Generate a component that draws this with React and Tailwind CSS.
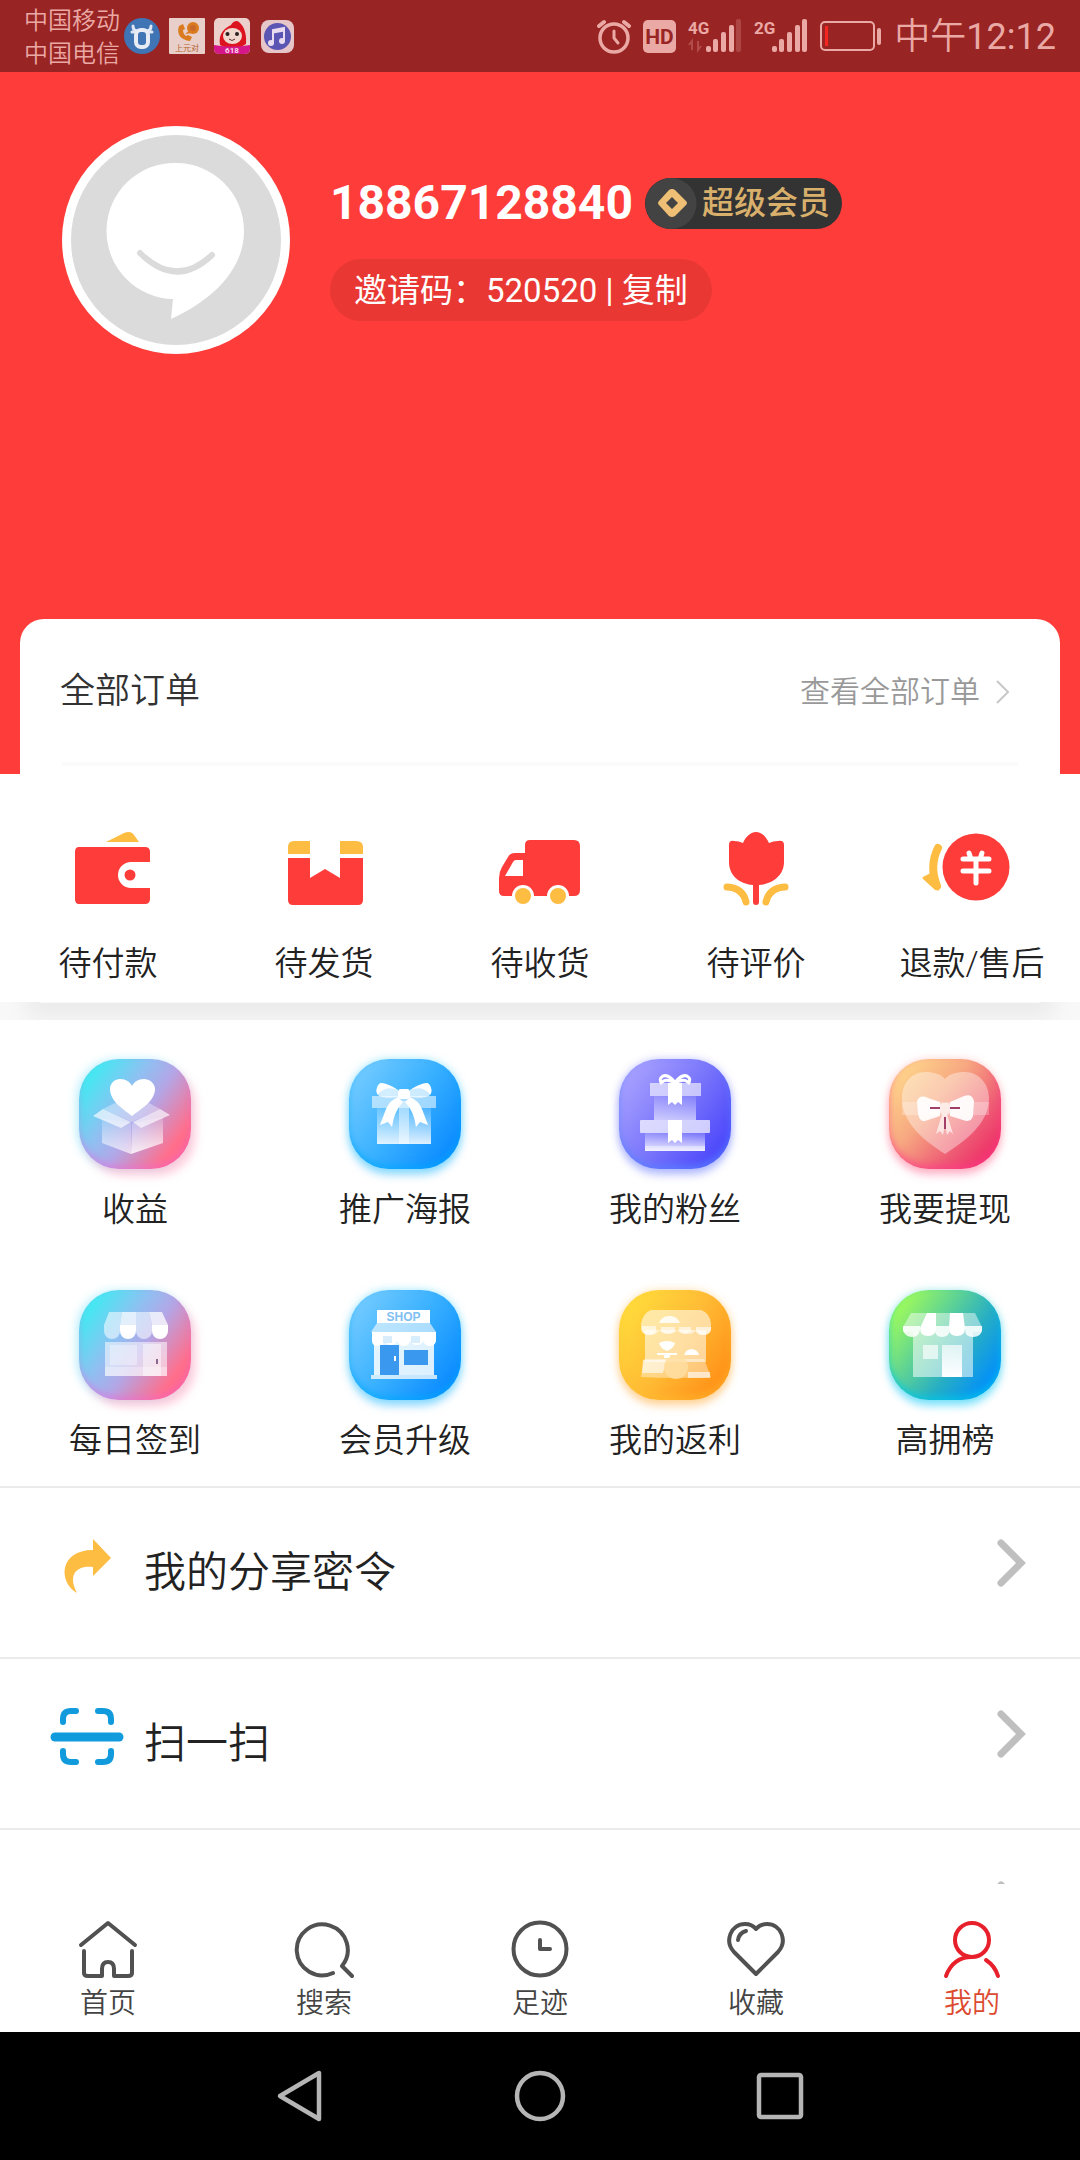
import React from "react";

const orders = [
  { label: "待付款", Icon: WalletIcon },
  { label: "待发货", Icon: ParcelIcon },
  { label: "待收货", Icon: TruckIcon },
  { label: "待评价", Icon: TulipIcon },
  { label: "退款/售后", Icon: RefundIcon },
];

const pinkTile =
  "bg-[linear-gradient(125deg,#38eff2_8%,#8fc0f2_38%,#b3a6e6_55%,#ff6f8c_82%,#ff5f86_100%)] shadow-[5px_7px_9px_rgba(255,120,160,0.35),-3px_0_9px_rgba(90,220,255,0.4),inset_0_-4px_6px_rgba(240,100,220,0.4)]";
const blueTile =
  "bg-[linear-gradient(125deg,#74cbff_8%,#38b0ff_50%,#0a8aff_90%)] shadow-[0_6px_9px_rgba(60,190,255,0.5),0_0_8px_rgba(90,220,255,0.5),inset_0_-4px_6px_rgba(0,170,255,0.6)]";

const services = [
  { label: "收益", Icon: EarningsIcon, tile: pinkTile },
  { label: "推广海报", Icon: GiftIcon, tile: blueTile },
  {
    label: "我的粉丝",
    Icon: GiftStackIcon,
    tile: "bg-[linear-gradient(125deg,#a9a2ff_8%,#7a76fb_50%,#4742fb_92%)] shadow-[0_6px_9px_rgba(110,130,255,0.45),0_0_8px_rgba(130,130,255,0.4),inset_0_-4px_7px_rgba(90,130,255,0.7)]",
  },
  {
    label: "我要提现",
    Icon: HeartBowIcon,
    tile: "bg-[linear-gradient(130deg,#ffdc8c_5%,#f7a981_40%,#ee5a74_70%,#ee2463_95%)] shadow-[0_6px_9px_rgba(255,70,130,0.35),0_0_8px_rgba(255,150,140,0.35),inset_0_-4px_7px_rgba(255,60,140,0.6)]",
  },
  { label: "每日签到", Icon: StallIcon, tile: pinkTile },
  { label: "会员升级", Icon: ShopIcon, tile: blueTile },
  {
    label: "我的返利",
    Icon: BakeryIcon,
    tile: "bg-[linear-gradient(125deg,#ffdf3c_5%,#ffbb35_50%,#ff8a12_95%)] shadow-[0_6px_9px_rgba(255,175,70,0.45),0_0_8px_rgba(255,190,80,0.4),inset_0_-4px_7px_rgba(255,190,50,0.5)]",
  },
  {
    label: "高拥榜",
    Icon: MarketIcon,
    tile: "bg-[linear-gradient(125deg,#a6ff55_8%,#5fd394_38%,#27aec4_62%,#008cff_90%)] shadow-[0_6px_9px_rgba(0,200,255,0.45),0_0_8px_rgba(110,220,220,0.5),inset_0_-4px_7px_rgba(0,200,230,0.7)]",
  },
];

const tabs = [
  { label: "首页", Icon: HomeIcon },
  { label: "搜索", Icon: SearchIcon },
  { label: "足迹", Icon: ClockIcon },
  { label: "收藏", Icon: HeartIcon },
  { label: "我的", Icon: UserIcon, active: true },
];

export default function App() {
  return (
    <div className="flex h-screen flex-col bg-white font-[Roboto,'Noto_Sans_CJK_SC',sans-serif] text-[#222]">
      <StatusBar />
      <main className="min-h-0 flex-1 overflow-y-auto [scrollbar-width:none]">
        <Profile />
        <Orders />
        <Services />
        <Menu />
      </main>
      <TabBar />
      <SystemNav />
    </div>
  );
}

function StatusBar() {
  return (
    <header className="flex h-[72px] shrink-0 items-center justify-between bg-[#992424] px-6 text-[#eaa9a4]">
      <div className="flex items-center gap-[9px]">
        <div className="mr-[-5px] pt-1 text-2xl leading-[33px] font-[350]">
          <p>中国移动</p>
          <p>中国电信</p>
        </div>
        <svg width="36" height="36" viewBox="0 0 36 36">
          <circle cx="18" cy="18" r="18" fill="#3f74b5" />
          <path d="M9 8c0 4 2 5 5 5M27 8c0 4-2 5-5 5" fill="none" stroke="#dfe6f2" strokeWidth="3" strokeLinecap="round" />
          <path d="M8 14h3M28 14h-3" stroke="#dfe6f2" strokeWidth="3" strokeLinecap="round" />
          <rect x="12" y="12" width="12" height="17" rx="5" fill="#3f74b5" stroke="#e6ebf4" strokeWidth="4" />
        </svg>
        <svg width="36" height="36" viewBox="0 0 36 36">
          <rect width="36" height="36" rx="1" fill="#e8cfc9" />
          <path d="M10 8c-3 8 2 14 11 15l2-4-4-2-2 1c-2-1-3-4-3-6l2-1-2-5z" fill="#db7b1f" />
          <circle cx="24" cy="10" r="6" fill="#db7b1f" />
          <path d="M16 16l5-4 2 3z" fill="#db7b1f" />
          <circle cx="24" cy="10" r="3" fill="#c9682a" />
          <text x="18" y="33" textAnchor="middle" fontSize="8" fill="#b5602c">上元对</text>
        </svg>
        <svg width="36" height="36" viewBox="0 0 36 36">
          <rect width="36" height="36" rx="5" fill="#ecd0cc" />
          <path d="M6 27c-2-12 5-17 11-20 2-4 6-5 8-3 5 4 8 12 7 22l-5 3H10z" fill="#dc1420" />
          <ellipse cx="18.500" cy="18" rx="9.500" ry="8" fill="#f1d8cf" />
          <circle cx="13.500" cy="16" r="2" fill="#2b2022" />
          <circle cx="23" cy="16" r="2" fill="#2b2022" />
          <path d="M15 21q3 3 6 0" stroke="#5a3030" fill="none" />
          <path d="M0 27q18 3 36 0v4a5 5 0 0 1-5 5H5a5 5 0 0 1-5-5z" fill="#d6178a" />
          <text x="18" y="35" textAnchor="middle" fontSize="8" fontWeight="700" fill="#f7d9ea">618</text>
        </svg>
        <svg width="36" height="36" viewBox="0 0 36 36">
          <rect x="2" y="2" width="33" height="33" rx="8" fill="#e6c6c9" />
          <circle cx="18.500" cy="18.500" r="13.500" fill="#5b55b4" />
          <path d="M14 25V12l11-2v13" fill="none" stroke="#e9dcf0" strokeWidth="2" />
          <path d="M14 14l11-2" stroke="#e9dcf0" strokeWidth="3" />
          <circle cx="12" cy="25" r="3" fill="#e9dcf0" />
          <circle cx="23" cy="23" r="3" fill="#e9dcf0" />
        </svg>
      </div>
      <div className="flex items-center gap-3">
        <svg width="34" height="36" viewBox="0 0 34 36" fill="none" stroke="currentColor" strokeWidth="4" strokeLinecap="round">
          <circle cx="17" cy="20" r="14" strokeWidth="3.500" />
          <path d="M2 8l5-4M32 8l-5-4" />
          <path d="M17 13v7l4 5" strokeWidth="3" />
        </svg>
        <svg width="33" height="33" viewBox="0 0 33 33">
          <rect width="33" height="33" rx="5" fill="currentColor" />
          <text x="16.500" y="24" textAnchor="middle" fontSize="21" fontWeight="700" fill="#992424">HD</text>
        </svg>
        <Signal label="4G" weak />
        <Signal label="2G" />
        <svg width="62" height="30" viewBox="0 0 62 30">
          <rect x="1" y="1" width="53" height="28" rx="4" fill="none" stroke="currentColor" strokeWidth="2" />
          <rect x="5" y="5" width="3" height="20" fill="#f5251f" />
          <rect x="57" y="7" width="4" height="17" rx="2" fill="currentColor" />
        </svg>
        <span className="pt-0.5 text-4xl leading-none whitespace-nowrap">
          <span className="font-[350]">中午</span>12:12
        </span>
      </div>
    </header>
  );
}

function Signal({ label, weak }) {
  return (
    <svg width="54" height="36" viewBox="0 0 54 36" fill="currentColor">
      <text x="0" y="16" fontSize="17" fontWeight="700">{label}</text>
      {weak && <path d="M4 32v-9l-3 4M10 23v9l3-4" fill="none" stroke="currentColor" strokeWidth="2" opacity="0.3" />}
      <rect x="18" y="28" width="5" height="6" rx="2" />
      <rect x="25" y="21" width="5" height="13" rx="2" />
      <rect x="33" y="14" width="5" height="20" rx="2" />
      <rect x="41" y="7" width="5" height="27" rx="2" />
      <rect x="48" y="1" width="5" height="33" rx="2" opacity={weak ? 0.25 : 1} />
    </svg>
  );
}

function Profile() {
  return (
    <section className="bg-[#fe3d3b]">
      <div className="flex h-[547px] items-start gap-10 pt-[54px] pl-[62px]">
        <svg width="228" height="228" viewBox="0 0 228 228" className="shrink-0">
          <circle cx="114" cy="114" r="114" fill="#fff" />
          <circle cx="114" cy="114" r="105" fill="#dbdbdb" />
          <path d="M114 37a68 68 0 0 1 68 68c0 37-29 68-73 88l2-20a68 68 0 0 1 3-136z" fill="#fff" />
          <path d="M78 127q36 36 72 2" fill="none" stroke="#dbdbdb" strokeWidth="6" strokeLinecap="round" />
        </svg>
        <div className="mt-[51px] flex flex-col items-start gap-[30px]">
          <div className="flex items-center gap-3">
            <h1 className="text-5xl leading-[52px] font-bold text-white">18867128840</h1>
            <span className="flex h-[51px] items-center rounded-full bg-[#333] pr-3 text-[32px] leading-none font-medium text-[#d9b06b]">
              <svg width="57" height="51" viewBox="0 0 57 51">
                <circle cx="26" cy="25.500" r="25.500" fill="#434343" />
                <path fillRule="evenodd" d="M27 11q2 0 3 1l11 11q2 2 0 4L30 38q-3 2-6 0L14 27q-2-2 0-4l10-11q1-1 3-1zM27 19l-6 6 6 6 6-6z" fill="#eebf74" />
              </svg>
              超级会员
            </span>
          </div>
          <button className="h-[62px] rounded-full bg-[#e93834] px-6 text-[33px] leading-none text-white">邀请码：520520 | 复制</button>
        </div>
      </div>
      <div className="mx-5 h-[155px] rounded-t-3xl bg-white px-[42px]">
        <div className="flex h-[147px] items-center justify-between border-b-4 border-[#fbfbfb] pt-0.5">
          <h2 className="-ml-0.5 text-[35px] leading-none text-[#333] font-[350]">全部订单</h2>
          <a href="#orders" className="mr-2 flex items-center gap-4 text-[30px] leading-none text-[#999] font-[350]">
            查看全部订单
            <svg width="14" height="24" viewBox="0 0 14 24" fill="none" stroke="#c8c8c8" strokeWidth="2">
              <path d="M1 1l11 11L1 23" />
            </svg>
          </a>
        </div>
      </div>
    </section>
  );
}

function Orders() {
  return (
    <section>
      <div className="grid h-[228px] grid-cols-5 pt-[54px]">
        {orders.map(({ label, Icon }) => (
          <a key={label} href="#order" className="flex flex-col items-center gap-[35px] text-[33px] leading-[42px] font-[350] whitespace-nowrap">
            <Icon />
            {label}
          </a>
        ))}
      </div>
      <div className="h-[18px] overflow-hidden bg-[#f8f8f8]">
        <div className="mx-10 h-px shadow-[0_0_22px_14px_rgba(0,0,0,0.06)]" />
      </div>
    </section>
  );
}

function Services() {
  return (
    <section className="grid h-[466px] grid-cols-4 content-start gap-y-[58px] pt-[39px]">
      {services.map(({ label, Icon, tile }) => (
        <a key={label} href="#service" className="flex flex-col items-center gap-[18px] text-[33px] leading-[45px] font-[350]">
          <span className={`block h-[110px] w-28 rounded-[40px] ${tile}`}>
            <svg width="112" height="110" viewBox="0 0 112 110" fill="#fff">
              <defs>
                <linearGradient id="fadeDown" x1="0" y1="0" x2="0" y2="1">
                  <stop offset="0" stopColor="#fff" stopOpacity="0.15" />
                  <stop offset="1" stopColor="#fff" stopOpacity="0.85" />
                </linearGradient>
                <linearGradient id="fadeUp" x1="0" y1="0" x2="0" y2="1">
                  <stop offset="0" stopColor="#fff" stopOpacity="0.65" />
                  <stop offset="1" stopColor="#fff" />
                </linearGradient>
              </defs>
              <Icon />
            </svg>
          </span>
          {label}
        </a>
      ))}
    </section>
  );
}

function Menu() {
  return (
    <nav>
      <MenuRow label="我的分享密令">
        <svg width="74" height="60" viewBox="0 0 74 60" className="mb-3.5">
          <path d="M43 3l18 19-18 18v-9c-18-2-25 9-16 26C8 46 9 14 43 14z" fill="#fdbc42" />
        </svg>
      </MenuRow>
      <MenuRow label="扫一扫">
        <svg width="74" height="60" viewBox="0 0 74 60" fill="none" stroke="#119bdc" strokeWidth="6" strokeLinecap="round" className="mb-3.5">
          <path d="M13 15v-3q0-8 8-8h5M48 4h5q8 0 8 8v3M13 44v3q0 8 8 8h5M48 55h5q8 0 8-8v-3" />
          <path d="M5 30h64" strokeWidth="9" />
        </svg>
      </MenuRow>
      <MenuRow />
    </nav>
  );
}

function MenuRow({ label, children }) {
  return (
    <a href="#menu" className="flex h-[171px] items-center border-t-2 border-[#ebebeb] pr-[54px] pl-[50px] text-[42px] leading-none font-[350]">
      {children}
      {label && <span className="ml-5">{label}</span>}
      <svg width="30" height="52" viewBox="0 0 30 52" fill="none" stroke="#bfbfbf" strokeWidth="7" strokeLinecap="round" className="mb-4 ml-auto">
        <path d="M5 4l20 20L5 44" />
      </svg>
    </a>
  );
}

function TabBar() {
  return (
    <nav className="grid h-[148px] shrink-0 grid-cols-5 bg-white pt-[35px]">
      {tabs.map(({ label, Icon, active }) => (
        <a
          key={label}
          href="#tab"
          className={active ? "flex flex-col items-center gap-1 text-[28px] leading-[42px] text-[#dc4a30] font-[350]" : "flex flex-col items-center gap-1 text-[28px] leading-[42px] text-[#444] font-[350]"}
        >
          <svg width="60" height="60" viewBox="0 0 60 60" fill="none" stroke={active ? "#e8202c" : "#515151"} strokeWidth="4" strokeLinecap="round" strokeLinejoin="round">
            <Icon />
          </svg>
          {label}
        </a>
      ))}
    </nav>
  );
}

function SystemNav() {
  return (
    <div className="flex h-32 shrink-0 items-center justify-center gap-[180px] bg-black text-[#b5b5b5]">
      <button aria-label="返回">
        <svg width="60" height="60" viewBox="0 0 60 60" fill="none" stroke="currentColor" strokeWidth="4.500" strokeLinejoin="round">
          <path d="M49 7v46L10 30z" />
        </svg>
      </button>
      <button aria-label="主屏幕">
        <svg width="60" height="60" viewBox="0 0 60 60" fill="none" stroke="currentColor" strokeWidth="4.500">
          <circle cx="30" cy="30" r="23" />
        </svg>
      </button>
      <button aria-label="最近任务">
        <svg width="60" height="60" viewBox="0 0 60 60" fill="none" stroke="currentColor" strokeWidth="4.500">
          <rect x="9" y="9" width="42" height="42" rx="2" />
        </svg>
      </button>
    </div>
  );
}

/* Order state icons */

function OrderSvg({ children }) {
  return (
    <svg width="96" height="80" viewBox="0 0 96 80" overflow="visible" fill="#fe3d3b">
      {children}
    </svg>
  );
}

function WalletIcon() {
  return (
    <OrderSvg>
      <path d="M46 14L64 5q7-3 10 2l5 7z" fill="#fdbc42" />
      <path d="M19 19h66q5 0 5 5v10H71a13 13 0 0 0 0 26h19v11q0 5-5 5H19q-4 0-4-5V24q0-5 4-5z" />
      <circle cx="70" cy="47" r="5.500" />
    </OrderSvg>
  );
}

function ParcelIcon() {
  return (
    <OrderSvg>
      <path d="M12 26v-7q0-6 6-6h16v13zM64 13h16q7 0 7 6v7H64z" fill="#fdbc42" />
      <path d="M12 30h22v20l15-9 15 9V30h23v42q0 5-5 5H17q-5 0-5-5z" />
    </OrderSvg>
  );
}

function TruckIcon() {
  return (
    <OrderSvg>
      <path
        fillRule="evenodd"
        d="M38 12h44q6 0 6 6v44q0 6-6 6H12q-5 0-5-5V50q0-6 3-11l6-10q2-4 7-4h10v-8q0-5 5-5zM31 32h-7q-2 0-3 2l-8 14h18z"
      />
      <circle cx="31" cy="68" r="11" fill="#fff" />
      <circle cx="66" cy="68" r="11" fill="#fff" />
      <circle cx="31" cy="68" r="8" fill="#fdbc42" />
      <circle cx="66" cy="68" r="8" fill="#fdbc42" />
    </OrderSvg>
  );
}

function TulipIcon() {
  return (
    <OrderSvg>
      <path d="M21 17q0-5 5-4 5 0 9 2C38 8 43 4 48 4s10 4 13 11q4-2 9-2 6-1 6 4v17c0 13-11 22-25 23v17q0 3-3 3t-3-3V57C31 56 21 47 21 34z" />
      <path d="M19 59q16 1 19 15M77 59q-16 1-19 15" fill="none" stroke="#fdbc42" strokeWidth="7" strokeLinecap="round" />
    </OrderSvg>
  );
}

function RefundIcon() {
  return (
    <OrderSvg>
      <circle cx="52" cy="39" r="33.500" />
      <path d="M39 31h26M39 43h26M52 31v24M45 25l2 6M58 25l-2 6" fill="none" stroke="#fff" strokeWidth="5" strokeLinecap="round" />
      <path d="M14 20q-9 18-1 38" fill="none" stroke="#fdbc42" strokeWidth="8" strokeLinecap="round" />
      <path d="M0 50l8-4 6 15-3-1z" fill="#fdbc42" stroke="#fdbc42" strokeWidth="3" strokeLinejoin="round" />
    </OrderSvg>
  );
}

/* Service tile drawings, on a 112 x 110 canvas */

function EarningsIcon() {
  return (
    <>
      <path d="M24 50l12-6h34l11 6-28 13z" opacity="0.35" />
      <path d="M23 59l29 5v31l-29-11z" fill="url(#fadeDown)" opacity="0.8" />
      <path d="M53 64l31-6v26L52 95z" fill="url(#fadeDown)" />
      <path d="M14 57l10-7 28 13-10 6zM91 56l-10-6-27 13 8 6z" opacity="0.65" />
      <path d="M53 57C44 50 31 42 31 30c0-6 5-10 10-10 6 0 10 3 12 7 2-4 6-7 12-7 5 0 11 4 11 10 0 12-14 20-23 27z" />
    </>
  );
}

function GiftIcon() {
  return (
    <>
      <rect x="23" y="37" width="64" height="12" opacity="0.55" />
      <rect x="28" y="49" width="54" height="36" fill="url(#fadeDown)" />
      <rect x="50" y="42" width="10" height="43" opacity="0.45" />
      <path d="M49 31q-9-6-17-7c-4 1-6 10-3 12q5 4 20 2zM61 31q9-6 17-7c4 1 6 10 3 12q-5 4-20 2z" opacity="0.75" />
      <path d="M29 35q8-9 20-4-9-6-17-7c-4 1-6 9-3 11zM81 35q-8-9-20-4 9-6 17-7c4 1 6 9 3 11z" />
      <rect x="49" y="30" width="12" height="10" rx="3" />
      <path d="M49 38q-8 3-12 12l-6 16 8-3 4 5q2-16 11-25zM61 38q8 3 12 12l6 16-8-3-4 5q-2-16-11-25z" />
    </>
  );
}

function GiftStackIcon() {
  return (
    <>
      <rect x="31" y="24" width="51" height="13" opacity="0.6" />
      <rect x="35" y="37" width="42" height="24" fill="url(#fadeDown)" opacity="0.7" />
      <rect x="21" y="61" width="70" height="13" rx="1" opacity="0.7" />
      <rect x="26" y="74" width="60" height="18" fill="url(#fadeDown)" />
      <rect x="26" y="87" width="60" height="5" opacity="0.35" />
      <path d="M49 24h14v22l-4-3-3 3-3-3-4 3zM49 61h14v23l-4-3-3 3-3-3-4 3z" />
      <path d="M56 24q-6-9-12-7-5 3-1 8M56 24q6-9 12-7 5 3 1 8M43 23q5-4 13 1 8-5 13-1" fill="none" stroke="#fff" strokeWidth="3" />
    </>
  );
}

function HeartBowIcon() {
  return (
    <>
      <path d="M56 95C38 83 13 66 13 39c0-15 10-26 23-26 9 0 16 2 20 7 4-5 11-7 20-7 13 0 24 11 24 26 0 27-26 44-44 56z" opacity="0.38" />
      <rect x="13" y="43" width="87" height="13" opacity="0.25" />
      <path d="M28 42q3-7 11-3l12 4v14l-12 4q-8 4-10-6zM85 42q-2-8-10-5l-14 6v14l13 4q8 3 10-4z" opacity="0.92" />
      <rect x="51" y="44" width="10" height="11" rx="3" opacity="0.6" />
      <path d="M53 55l-6 20 4-3 3 4 2-10 2 10 3-4 3 3-6-20z" opacity="0.65" />
      <path d="M41 49h10M61 49h10M56 58v12" stroke="#a04068" strokeWidth="2" />
    </>
  );
}

function StallIcon() {
  return (
    <>
      <rect x="26" y="52" width="62" height="34" opacity="0.55" />
      <rect x="31" y="55" width="27" height="20" opacity="0.35" />
      <rect x="64" y="54" width="18" height="32" opacity="0.45" />
      <rect x="26" y="77" width="62" height="9" opacity="0.3" />
      <path d="M30 22h13l-2 13v6a8 8 0 0 1-16 0v-6zM57 22h13l3 13v6a8 8 0 0 1-16 0z" opacity="0.55" />
      <path d="M43 22h14v13H41zM70 22h13l6 13H73z" opacity="0.75" />
      <path d="M41 35h16v6a8 8 0 0 1-16 0zM73 35h16v6a8 8 0 0 1-16 0z" />
      <path d="M78 69v5" stroke="#8c6a90" strokeWidth="2" />
    </>
  );
}

function ShopIcon() {
  return (
    <>
      <rect x="28" y="20" width="53" height="13" />
      <text x="54.500" y="31" textAnchor="middle" fontSize="12" fontWeight="700" fontFamily="'Liberation Sans', sans-serif" fill="#7fc0f2">SHOP</text>
      <path d="M28 33h53l6 9H22z" opacity="0.6" />
      <rect x="25" y="50" width="60" height="35" opacity="0.85" />
      <rect x="22" y="85" width="66" height="4" opacity="0.75" />
      <path d="M23 42h64v9q-1 5-6 5t-7-5q-1 4-6 4t-7-4q-1 5-6 5t-7-5q-1 4-6 4t-6-4q-1 5-7 5t-6-5z" />
      <path d="M31 55h19v30H31z" fill="#3a98ee" />
      <rect x="55" y="60" width="24" height="15" fill="#3a98ee" />
      <path d="M46 66v5" stroke="#fff" strokeWidth="2" />
      <path d="M34 46h9v7h-9zM62 46h9v7h-9z" fill="#bfe2fb" opacity="0.6" />
    </>
  );
}

function BakeryIcon() {
  return (
    <>
      <rect x="26" y="40" width="61" height="32" opacity="0.55" />
      <path d="M32 20h50q9 3 10 14v6q-1 5-8 5-6 0-7-5-2 4-9 4t-10-4q-3 4-9 4t-9-4q-2 5-9 5-8 0-9-6v-5q2-11 10-14z" opacity="0.55" />
      <path d="M23 36h14v5q-3 4-7 4-6 0-7-5zM42 37h14v4q-7 5-14 0zM60 37h12v4q-6 5-12 0zM77 37h15v3q-2 5-8 5-5 0-7-4z" opacity="0.6" />
      <path d="M40 33q2-6 9-7 9-1 12 7z" opacity="0.85" />
      <path d="M48 61q-7-3-8-8 8-4 16 0-1 5-8 8zM38 63h20v2h-7v3h-6v-3h-7zM65 65q2-6 8-6 6 1 7 6z" />
      <path d="M25 69h60l7 18q-35 2-70 0z" opacity="0.4" />
      <path d="M24 70h23l-3 13H23zM69 82h22v6H69z" opacity="0.6" />
      <circle cx="57" cy="77" r="12" fill="#ffdfa3" opacity="0.8" />
    </>
  );
}

function MarketIcon() {
  return (
    <>
      <rect x="24" y="42" width="60" height="45" opacity="0.55" />
      <rect x="34" y="55" width="15" height="14" opacity="0.65" />
      <rect x="53" y="55" width="20" height="32" fill="url(#fadeUp)" />
      <path d="M22 23h64l7 14v5H14v-5z" opacity="0.45" />
      <path d="M38 23h9v15q0 8-8 8t-8-8zM61 23h13l2 15q0 8-8 8t-8-8z" />
      <path d="M14 36h17v4q-1 7-8 7t-9-7zM46 36h15v4q-1 7-8 7t-7-7zM76 36h17v4q-1 7-9 7t-8-7z" opacity="0.85" />
    </>
  );
}

/* Tab icons, stroked on a 60 x 60 canvas */

function HomeIcon() {
  return (
    <>
      <path d="M3 26L30 4l27 22" />
      <path d="M6 32v22q0 3 4 3h14V50q0-7 6-7t6 7v7h14q4 0 4-3V32" />
    </>
  );
}

function SearchIcon() {
  return <path d="M39 54A25.500 25.500 0 1 1 48 47L58 57M48 47A25.500 25.500 0 0 0 50 44" />;
}

function ClockIcon() {
  return (
    <>
      <circle cx="30" cy="30" r="26.500" />
      <path d="M30 21v9h10" />
    </>
  );
}

function HeartIcon() {
  return (
    <>
      <path d="M30 55L8 33C-2 22 5 5 19 5q7 0 11 5 4-5 11-5c14 0 21 17 11 28z" />
      <path d="M12 21q1-7 8-9" />
    </>
  );
}

function UserIcon() {
  return (
    <>
      <circle cx="30" cy="21" r="17" />
      <path d="M30 38Q11 38 4 57M44 41q9 6 12 16" />
    </>
  );
}
